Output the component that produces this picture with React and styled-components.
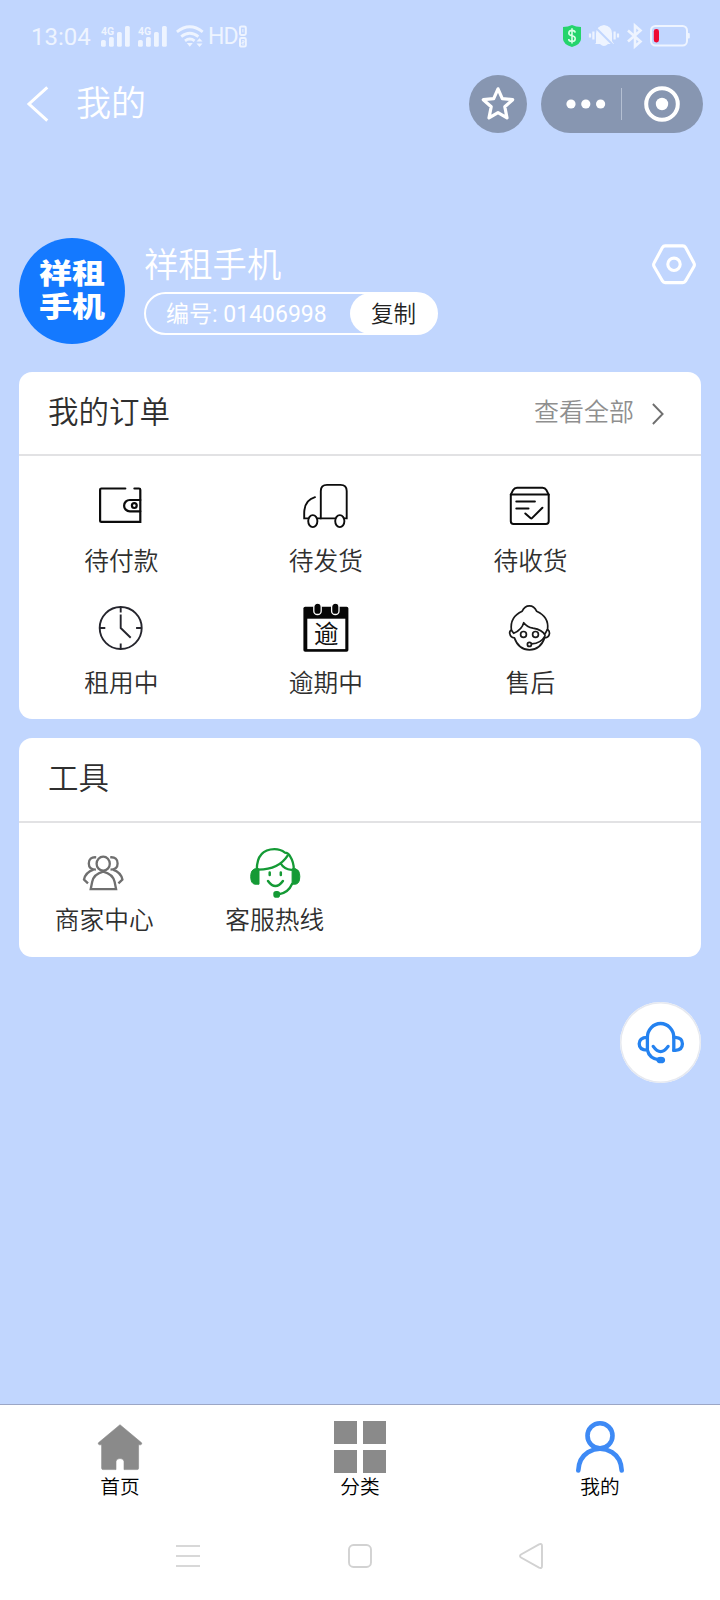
import React from "react";
import styled, { createGlobalStyle } from "styled-components";

const GlobalStyle = createGlobalStyle`
  * {
    box-sizing: border-box;
  }
  body {
    margin: 0;
    background: #c1d6fe;
    font-family: Roboto, "Noto Sans CJK SC", sans-serif;
  }
  svg {
    display: block;
    flex: none;
    overflow: visible;
  }
`;

/* ---------- status bar icons ---------- */

const SignalIcon = () => (
  <svg width="30" height="24" viewBox="0 0 30 24" fill="#eef4ff">
    <text x="0" y="9.500" fontSize="10.500" fontWeight="700" fontFamily="Roboto, sans-serif">
      4G
    </text>
    <rect x="0" y="15" width="4.800" height="6.800" rx="1.600" />
    <rect x="8" y="12" width="4.800" height="9.800" rx="1.600" />
    <rect x="16" y="7" width="4.800" height="14.800" rx="1.600" />
    <rect x="24" y="1" width="4.800" height="20.800" rx="1.600" />
  </svg>
);

const WifiIcon = () => (
  <svg width="28" height="24" viewBox="0 0 28 24" fill="none" stroke="#eef4ff" strokeWidth="2.800">
    <path d="M.9 6.8Q13.8-3.4 26.7 6.8" />
    <path d="M5.2 11.6q8.6-6.8 17.2 0" />
    <path d="M9 15.8q4.8-3.6 9.6 0" />
    <path d="M10.8 18h6l-3 3.8zM20.5 16.6l3-3.4 3 3.4zM20.5 18.6l3 3.4 3-3.4z" fill="#eef4ff" stroke="none" />
  </svg>
);

const SimIcon = () => (
  <svg width="8" height="24" viewBox="0 0 8 24" fill="none" stroke="#eef4ff" strokeWidth="2">
    <rect x="1" y="1.4" width="5.8" height="8.6" rx="1.4" />
    <rect x="1" y="13" width="5.8" height="8.6" rx="1.4" />
    <path d="M3.9 4v3.4M3 15.8h2v1.6H3V19h2" strokeWidth="1" />
  </svg>
);

const ShieldIcon = () => (
  <svg width="18" height="22" viewBox="0 0 18 22">
    <path d="M9 0q4 2 9 2v12q0 5-9 8-9-3-9-8V2q5 0 9-2z" fill="#25d46c" />
    <path
      d="M12.2 7.6Q11.8 5.4 9 5.4T5.8 8q0 2.2 3.2 2.8t3.2 2.9q0 2.7-3.2 2.7t-3.3-2.4M9 3.2v15.2"
      fill="none"
      stroke="#d8ffe6"
      strokeWidth="1.600"
    />
  </svg>
);

const MuteIcon = () => (
  <svg width="30" height="24" viewBox="0 0 30 24" fill="#eef4ff">
    <path d="M7 19V9.5Q7 2 15 1q8 1 8 8.5V17l2 3H19q-4 4-8 0H6z" />
    <path d="M5 2l20 20" stroke="#c1d6fe" strokeWidth="2" />
    <path d="M4.4 7.5v8M1 9.6v4M25.6 7.5v8M29 9.6v4" stroke="#eef4ff" strokeWidth="2.200" />
  </svg>
);

const BluetoothIcon = () => (
  <svg width="15" height="24" viewBox="0 0 15 24" fill="none" stroke="#eef4ff" strokeWidth="2.600">
    <path d="M1 6.5l12.500 11L8 22.400V1.600l5.500 4.900L1 17.500" />
  </svg>
);

const BatteryIcon = () => (
  <svg width="40" height="22" viewBox="0 0 40 22">
    <rect x="1" y="1" width="36" height="19.5" rx="4.5" fill="none" stroke="#eef4ff" strokeWidth="2" />
    <rect x="37.5" y="8" width="2.3" height="5.5" rx="1" fill="#eef4ff" />
    <rect x="3.8" y="4" width="5.2" height="13.5" rx="2.4" fill="#ee0a33" />
  </svg>
);

/* ---------- title bar icons ---------- */

const BackIcon = () => (
  <svg width="22" height="36" viewBox="0 0 22 36" fill="none" stroke="#fff" strokeWidth="3">
    <path d="M20.3 1.3L2 18l18.3 16.7" />
  </svg>
);

const StarIcon = () => (
  <svg width="34" height="36" viewBox="0 0 34 36" fill="none" stroke="#fff" strokeWidth="3.200" strokeLinejoin="round">
    <path d="M17 2.800l4.300 9.800 10.400 1.100-7.900 7.100 2.200 11.100-9-5.300-9 5.300 2.200-11.100-7.900-7.100 10.400-1.100z" />
  </svg>
);

const DotsIcon = () => (
  <svg width="40" height="10" viewBox="0 0 40 10" fill="#fff">
    <circle cx="5" cy="5" r="4.600" />
    <circle cx="19.800" cy="5" r="4.600" />
    <circle cx="34.600" cy="5" r="4.600" />
  </svg>
);

const TargetIcon = () => (
  <svg width="36" height="36" viewBox="0 0 36 36">
    <circle cx="18" cy="18" r="15.800" fill="none" stroke="#fff" strokeWidth="4" />
    <circle cx="18" cy="18" r="6.200" fill="#fff" />
  </svg>
);

const SettingsIcon = () => (
  <svg width="44" height="42" viewBox="0 0 44 42" fill="none" stroke="#fff" strokeWidth="3.100" strokeLinejoin="round">
    <path d="M13.2 1.9h17.6q1.8 0 2.8 1.6l8.2 15.2q1.2 2 0 4l-8.2 14.2q-1 1.7-2.8 1.7H13.2q-1.8 0-2.8-1.7L2.2 22.7q-1.2-2 0-4l8.2-15.2q1-1.6 2.8-1.6z" />
    <circle cx="22" cy="20.3" r="6.2" />
  </svg>
);

const ArrowIcon = () => (
  <svg width="12" height="22" viewBox="0 0 12 22" fill="none" stroke="#6f6f6f" strokeWidth="1.900">
    <path d="M.9 1l9.7 10L.9 21" />
  </svg>
);

/* ---------- order icons ---------- */

const WalletIcon = () => (
  <svg width="48" height="48" viewBox="0 0 48 48" fill="none" stroke="#0c0c0c" strokeWidth="2.200" strokeLinecap="round">
    <path d="M28.300 6.500H4.400Q3.100 6.500 3.100 7.800v30.600q0 1.400 1.400 1.400h38.800V7.800q0-1.300-1.300-1.300h-4.600" />
    <path d="M43.300 18H32.800a5.700 5.650 0 0 0 0 11.300h10.500" />
    <circle cx="37.300" cy="23.600" r="2.400" />
  </svg>
);

const TruckIcon = () => (
  <svg width="48" height="48" viewBox="0 0 48 48" fill="none" stroke="#0c0c0c" strokeWidth="1.900" strokeLinecap="round">
    <path d="M18.800 36.400V9q0-6.100 6.200-6.100h13.500q6.200 0 6.200 6.100v27.400h-2.400" />
    <path d="M13 15.200Q2.200 18.200 2.200 31.600v4.800h3.900M15.400 36.400h17.700" />
    <ellipse cx="10.800" cy="39.100" rx="4.600" ry="6" />
    <ellipse cx="37.800" cy="39.100" rx="4.600" ry="6" />
  </svg>
);

const ParcelIcon = () => (
  <svg width="48" height="48" viewBox="0 0 48 48" fill="none" stroke="#0c0c0c" strokeWidth="2" strokeLinecap="round" strokeLinejoin="round">
    <path d="M4.800 12.600v26.600q0 2.700 2.700 2.700h32.500q2.700 0 2.700-2.700V12.600z" />
    <path d="M4.800 12.600l2.400-4.700Q8.400 5.800 11 5.800h25.600q2.500 0 3.700 2.100l2.400 4.700" />
    <path d="M10.300 19.500h18.600M10.300 26.600h12.200" />
    <path d="M19.300 31.500l5.400 4.800q.7.500 1.300-.2l10.400-10.400" />
  </svg>
);

const ClockIcon = () => (
  <svg width="48" height="48" viewBox="0 0 48 48" fill="none" stroke="#25252d" strokeWidth="1.900">
    <circle cx="23.700" cy="24" r="21" />
    <path d="M23.700 3v5.400M23.700 39.400V45M2.700 24h5.600M39.100 24h5.600" />
    <path d="M23.700 10.500V24l10 9.800" />
  </svg>
);

const OverdueIcon = () => (
  <svg width="48" height="48" viewBox="0 0 48 48">
    <rect x="1.400" y="2.700" width="45" height="45" rx="1.800" fill="#060606" />
    <rect x="5.300" y="14.700" width="38" height="30.400" fill="#fff" />
    <rect x="11.800" y="-.8" width="7.400" height="11.300" rx="3.600" fill="#060606" stroke="#fff" strokeWidth="1.300" />
    <rect x="29.600" y="-.8" width="7.400" height="11.300" rx="3.600" fill="#060606" stroke="#fff" strokeWidth="1.300" />
    <text x="24.200" y="39" textAnchor="middle" fontSize="24.500" fontWeight="400" fill="#111" fontFamily="'Noto Sans CJK SC', sans-serif">
      逾
    </text>
  </svg>
);

const AfterSaleIcon = () => (
  <svg width="48" height="48" viewBox="0 0 48 48" fill="none" stroke="#1a1a1a" strokeWidth="1.700" strokeLinecap="round" strokeLinejoin="round">
    <path d="M5.400 26.200Q3.600 12.800 16.200 7.200 18.600 1.900 23.400 1.900t7.200 5.300q12.600 5.600 11 18.200" />
    <path d="M5.400 26.200q-2 .5-1.700 3.100.8 4.200 4.700 4.600Q12.600 45.800 23.500 45.800t15.100-11.900q4.400-.6 4.900-4.600.2-2.600-2-3.900" />
    <path d="M5.400 26.200l2.300 3.100q8.200-3.600 10-10.600 3.100 4.300 9.300 5.500 9.500 1.600 12 7M41.500 25.400L38.900 30" />
    <circle cx="17.500" cy="30.400" r="2.900" />
    <circle cx="29.500" cy="30.400" r="2.900" />
    <circle cx="23.400" cy="40.400" r="2" />
    <path d="M25.600 39.800q9.400-.2 13.300-7.600" />
  </svg>
);

/* ---------- tool icons ---------- */

const MerchantIcon = () => (
  <svg width="50" height="50" viewBox="0 0 50 50" fill="none" stroke="#6f6f6f" strokeWidth="2.300">
    <ellipse cx="24.200" cy="15.700" rx="6.600" ry="7" />
    <path d="M24.200 23.600q-9.500 2.400-11 10.200l-1.500 7.400h25.400l-1.500-7.400q-1.700-7.800-11.400-10.200z" />
    <path d="M17.200 9.300q-7.400-.6-7.400 6.100 0 6 7.100 6.300M31.200 9.300q7.400-.6 7.400 6.100 0 6-7.100 6.300" />
    <path d="M14.500 21.700Q6.500 24.500 5 31.500l4 3.900M33.900 21.700q8 2.800 9.500 9.800l-4 3.900" />
  </svg>
);

const HotlineIcon = () => (
  <svg width="50" height="50" viewBox="0 0 50 50" fill="none" stroke="#149a35" strokeWidth="2.300" strokeLinecap="round">
    <path d="M6.800 21.500Q7 1.300 24.500 1.100q6 0 10.400 3.500 3.600.2 5.100 3.500 3.800 6 3.800 13.400" />
    <path d="M7.500 21.600Q28.500 22 37.800 7.400M30.800 15.500q3.300 5.900 10.600 6.300" />
    <path d="M5 21l4-.2v15.400H5Q.9 36 .7 28.600.8 21.400 5 21zM45.500 21l-3.400-.2v15.400h3.400q4.100-.2 4.300-7.600-.1-7.200-4.300-7.600z" fill="#149a35" strokeWidth="1" />
    <path d="M19.700 24.500v2.400M30.800 24.500v2.400" strokeWidth="2.500" />
    <path d="M18 33q7.400 10.200 14.900 0" strokeWidth="2.500" />
    <path d="M42 36q-3.600 8.800-13.500 10.400" />
    <rect x="23.300" y="43" width="6.800" height="6.700" rx="2.800" fill="#149a35" stroke="none" />
  </svg>
);

const ServiceIcon = () => (
  <svg width="80" height="80" viewBox="0 0 80 80" fill="none" stroke="#2482f0" strokeWidth="3.300" strokeLinecap="round">
    <path d="M27.400 47.500V35.400a13.200 13.900 0 0 1 26.400 0v13" />
    <path d="M27.400 35.300q-8.200.2-8.200 6.500t8.200 6.400q1.900 8.500 11.800 9.700" />
    <path d="M53.800 35.300h1.600q7 .3 7 6.500t-7 6.600h-1.600" />
    <path d="M33.200 44.400q7.400 10.400 14.900 0" />
    <ellipse cx="40.800" cy="58" rx="2.700" ry="1.700" fill="#2482f0" />
  </svg>
);

/* ---------- tab bar icons ---------- */

const HomeIcon = () => (
  <svg width="52" height="52" viewBox="0 0 52 52" fill="#8a8a8a">
    <path d="M26 3.700L4.400 21.800q-.8 1.500 1 2h2.200v23.300q0 1.500 1.500 1.500H22V40.500q.4-3 4-3t4 3v8.100h13.100q1.500 0 1.500-1.500V23.800h2q1.800-.5 1-2z" stroke="#8a8a8a" strokeWidth=".6" />
  </svg>
);

const CategoryIcon = () => (
  <svg width="52" height="52" viewBox="0 0 52 52" fill="#8a8a8a">
    <path d="M0 0h23v23H0zM29 0h23v23H29zM0 29h23v23H0zM29 29h23v23H29z" />
  </svg>
);

const UserIcon = () => (
  <svg width="52" height="52" viewBox="0 0 52 52" fill="none" stroke="#3e8af5" strokeWidth="4.600">
    <circle cx="26" cy="14.800" r="12.500" />
    <path d="M4.300 49.500Q4.800 37 14 31.200q12-7 24 0 9.200 5.800 9.700 18.300" strokeLinecap="round" />
  </svg>
);

const MenuKey = () => (
  <svg width="24" height="26" viewBox="0 0 24 26" stroke="#d8d8d8" strokeWidth="2">
    <path d="M0 3h24M0 13h24M0 23h24" />
  </svg>
);

const HomeKey = () => (
  <svg width="24" height="26" viewBox="0 0 24 26" fill="none" stroke="#d2d2d2" strokeWidth="1.900">
    <rect x="1" y="2" width="22" height="22" rx="4.500" />
  </svg>
);

const BackKey = () => (
  <svg width="24" height="26" viewBox="0 0 24 26" fill="none" stroke="#d2d2d2" strokeWidth="1.900">
    <path d="M20 1.300Q23 .2 23 3v20q0 2.800-3 1.700L2 14.500q-2-1.500 0-3z" />
  </svg>
);

const orders = [
  { title: "待付款", icon: <WalletIcon /> },
  { title: "待发货", icon: <TruckIcon /> },
  { title: "待收货", icon: <ParcelIcon /> },
  { title: "租用中", icon: <ClockIcon /> },
  { title: "逾期中", icon: <OverdueIcon /> },
  { title: "售后", icon: <AfterSaleIcon /> },
];

const tools = [
  { title: "商家中心", icon: <MerchantIcon /> },
  { title: "客服热线", icon: <HotlineIcon /> },
];

const tabs = [
  { title: "首页", icon: <HomeIcon /> },
  { title: "分类", icon: <CategoryIcon /> },
  { title: "我的", icon: <UserIcon /> },
];

export default function App() {
  return (
    <Page>
      <GlobalStyle />
      <StatusBar>
        <div className="left">
          <span className="time">13:04</span>
          <SignalIcon />
          <SignalIcon />
          <WifiIcon />
          <span className="hd">HD</span>
          <SimIcon />
        </div>
        <div className="right">
          <ShieldIcon />
          <MuteIcon />
          <BluetoothIcon />
          <BatteryIcon />
        </div>
      </StatusBar>
      <TitleBar>
        <BackIcon />
        <h1>我的</h1>
        <StarButton>
          <StarIcon />
        </StarButton>
        <Capsule>
          <DotsIcon />
          <i />
          <TargetIcon />
        </Capsule>
      </TitleBar>
      <Profile>
        <Avatar>
          <span>
            祥租
            <br />
            手机
          </span>
        </Avatar>
        <div className="info">
          <h2>祥租手机</h2>
          <IdPill>
            <span>编号: 01406998</span>
            <button>复制</button>
          </IdPill>
        </div>
        <SettingsIcon />
      </Profile>
      <Card $height="347px">
        <CardHead $height="84px">
          <h3>我的订单</h3>
          <a>
            <span>查看全部</span>
            <ArrowIcon />
          </a>
        </CardHead>
        <Items $top="26px">
          {orders.map((item) => (
            <Item key={item.title} $width="30%" $height="122px" $gap="14px">
              {item.icon}
              <p>{item.title}</p>
            </Item>
          ))}
        </Items>
      </Card>
      <Card $height="219px">
        <CardHead $height="85px">
          <h3>工具</h3>
        </CardHead>
        <Items $top="25px">
          {tools.map((item) => (
            <Item key={item.title} $width="25%" $height="100px" $gap="5px">
              {item.icon}
              <p>{item.title}</p>
            </Item>
          ))}
        </Items>
      </Card>
      <ServiceButton>
        <ServiceIcon />
      </ServiceButton>
      <TabBar>
        {tabs.map((tab) => (
          <Tab key={tab.title}>
            {tab.icon}
            <p>{tab.title}</p>
          </Tab>
        ))}
      </TabBar>
      <SystemKeys>
        <MenuKey />
        <HomeKey />
        <BackKey />
      </SystemKeys>
    </Page>
  );
}

const Page = styled.div`
  width: 720px;
  height: 1600px;
  display: flex;
  flex-direction: column;
  overflow: hidden;
  h1,
  h2,
  h3,
  p {
    margin: 0;
    font-weight: 350;
    white-space: nowrap;
  }
`;

const StatusBar = styled.div`
  height: 72px;
  padding: 0 30px 0 31px;
  display: flex;
  justify-content: space-between;
  align-items: center;
  color: #eef4ff;
  font-size: 24px;
  line-height: 28px;
  .left,
  .right {
    display: flex;
    align-items: center;
  }
  .left {
    gap: 7.500px;
    padding-top: 1px;
    .time {
      width: 62px;
    }
    .hd {
      width: 28px;
      margin-left: -3px;
      margin-right: -5px;
      font-size: 23px;
      letter-spacing: -0.800px;
    }
  }
  .right {
    gap: 8px;
  }
`;

const TitleBar = styled.div`
  height: 64px;
  padding: 0 17px 0 27px;
  display: flex;
  align-items: center;
  h1 {
    flex: 1;
    padding: 2px 0 0 27px;
    font-size: 35px;
    line-height: 52px;
    color: #fff;
  }
`;

const StarButton = styled.div`
  width: 58px;
  height: 58px;
  border-radius: 50%;
  background: #8796b1;
  display: flex;
  align-items: center;
  justify-content: center;
`;

const Capsule = styled.div`
  width: 162px;
  height: 58px;
  margin-left: 14px;
  padding: 0 23px 0 25px;
  border-radius: 29px;
  background: #8796b1;
  display: flex;
  align-items: center;
  justify-content: space-between;
  i {
    width: 1px;
    height: 32px;
    margin: 0 8px 0 1px;
    background: #b4bfd2;
  }
`;

const Profile = styled.div`
  height: 134px;
  margin: 102px 24px 0 19px;
  display: flex;
  align-items: flex-start;
  .info {
    flex: 1;
    padding-left: 19px;
    h2 {
      height: 54px;
      padding-top: 1px;
      font-size: 34.300px;
      line-height: 52px;
      color: #fff;
    }
  }
  > svg {
    margin-top: 6px;
  }
`;

const Avatar = styled.div`
  width: 106px;
  height: 106px;
  border-radius: 50%;
  background: #1479ff;
  display: flex;
  align-items: center;
  justify-content: center;
  span {
    font-size: 32px;
    line-height: 38px;
    font-weight: 900;
    color: #fff;
    transform: scale(1.03, 0.88);
  }
`;

const IdPill = styled.div`
  width: 294px;
  height: 43px;
  border: 2px solid #fff;
  border-radius: 22px;
  display: flex;
  justify-content: space-between;
  align-items: center;
  span {
    padding: 0 0 4px 20px;
    font-size: 23px;
    color: #fff;
  }
  button {
    width: 87px;
    height: 41px;
    margin-right: -1px;
    padding: 0 0 4px;
    border: 0;
    border-radius: 21px;
    background: #fff;
    font-family: inherit;
    font-size: 22.500px;
    font-weight: 350;
    color: #222;
  }
`;

const Card = styled.div`
  width: 682px;
  height: ${(p) => p.$height};
  margin: 0 0 19px 19px;
  border-radius: 13px;
  background: #fff;
  flex: none;
`;

const CardHead = styled.div`
  height: ${(p) => p.$height};
  padding: 0 37px 1px 29px;
  border-bottom: 2px solid #e2e2e4;
  display: flex;
  align-items: center;
  justify-content: space-between;
  h3 {
    font-size: 30.500px;
    line-height: 44px;
    color: #2f2f2f;
  }
  a {
    display: flex;
    align-items: center;
    gap: 18px;
    font-size: 25px;
    font-weight: 350;
    color: #8f8f8f;
    span {
      padding-bottom: 5px;
    }
    svg {
      margin-top: 3px;
    }
  }
`;

const Items = styled.div`
  padding-top: ${(p) => p.$top};
  display: flex;
  flex-wrap: wrap;
`;

const Item = styled.div`
  width: ${(p) => p.$width};
  height: ${(p) => p.$height};
  display: flex;
  flex-direction: column;
  align-items: center;
  gap: ${(p) => p.$gap};
  p {
    font-size: 24.700px;
    line-height: 36px;
    color: #2f2f2f;
  }
`;

const ServiceButton = styled.div`
  width: 81px;
  height: 81px;
  margin: 26px 19px 0 auto;
  border-radius: 50%;
  background: #fff;
  box-shadow: inset 0 0 0 1.500px #e6e9f0;
  flex: none;
`;

const TabBar = styled.div`
  height: 106px;
  margin-top: auto;
  padding-top: 16px;
  border-top: 1px solid #9ba6c6;
  background: #fff;
  display: grid;
  grid-template-columns: repeat(3, 1fr);
  flex: none;
`;

const Tab = styled.div`
  display: flex;
  flex-direction: column;
  align-items: center;
  p {
    font-size: 19.700px;
    line-height: 30px;
    color: #000;
  }
`;

const SystemKeys = styled.div`
  height: 90px;
  padding: 33px 177px 0 176px;
  background: #fff;
  display: flex;
  justify-content: space-between;
  flex: none;
`;
